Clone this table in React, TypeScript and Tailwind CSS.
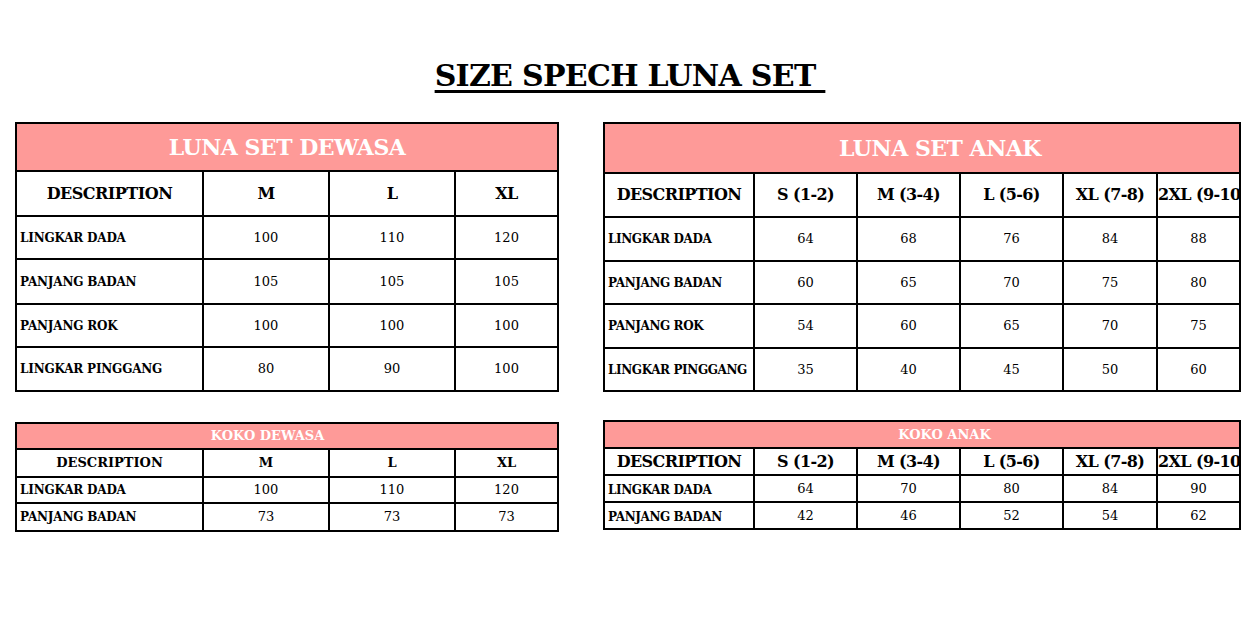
import React from "react";

type TableProps = {
  title: string;
  widthCls: string;
  colCls: string[];
  rowCls: string[];
  headers: string[];
  rows: string[][];
  titleCls: string;
  headCls: string;
  labelCls: string;
  numCls: string;
};

function SizeTable({ title, widthCls, colCls, rowCls, headers, rows, titleCls, headCls, labelCls, numCls }: TableProps) {
  return (
    <table className={`table-fixed border-collapse border-2 border-black ${widthCls}`}>
      <colgroup>
        {colCls.map((c, i) => (
          <col key={i} className={c} />
        ))}
      </colgroup>
      <tbody>
        <tr className={rowCls[0]}>
          <td colSpan={colCls.length} className={`bg-[#fe9a98] text-white text-center border-2 border-black ${titleCls}`}>
            {title}
          </td>
        </tr>
        <tr className={rowCls[1]}>
          {headers.map((h, i) => (
            <td key={i} className={`border-2 border-black text-center text-black whitespace-nowrap overflow-hidden ${headCls}`}>
              {h}
            </td>
          ))}
        </tr>
        {rows.map((r, ri) => (
          <tr key={ri} className={rowCls[ri + 2]}>
            {r.map((c, ci) => (
              <td
                key={ci}
                className={`border-2 border-black text-black whitespace-nowrap ${
                  ci === 0 ? `text-left pl-[3px] font-bold ${labelCls}` : `text-center ${numCls}`
                }`}
              >
                {c}
              </td>
            ))}
          </tr>
        ))}
      </tbody>
    </table>
  );
}

const LEFT_COLS = ["w-[187px]", "w-[126px]", "w-[126px]", "w-[103px]"];
const RIGHT_COLS = ["w-[150px]", "w-[103px]", "w-[103px]", "w-[103px]", "w-[94px]", "w-[83px]"];

export default function App() {
  return (
    <div className="w-[1260px] h-[630px] bg-white font-['DejaVu_Serif',serif]">
      <div className="h-[122px] flex justify-center pt-[58px]">
        <h1 className="text-[30px] leading-[36px] font-bold text-black underline decoration-[3px] underline-offset-[4px] whitespace-pre tracking-[-0.7px]">
          {"SIZE SPECH LUNA SET "}
        </h1>
      </div>
      <div className="flex pl-[15px] gap-[46px]">
        <div className="flex flex-col gap-[30px] w-[542px]">
          <SizeTable
            title="LUNA SET DEWASA"
            widthCls="w-[542px]"
            colCls={LEFT_COLS}
            rowCls={["h-[48px]", "h-[45px]", "h-[43px]", "h-[45px]", "h-[43px]", "h-[44px]"]}
            headers={["DESCRIPTION", "M", "L", "XL"]}
            rows={[
              ["LINGKAR DADA", "100", "110", "120"],
              ["PANJANG BADAN", "105", "105", "105"],
              ["PANJANG ROK", "100", "100", "100"],
              ["LINGKAR PINGGANG", "80", "90", "100"],
            ]}
            titleCls="text-[22px] font-bold tracking-[-0.5px]"
            headCls="text-[16px] font-bold tracking-[-0.5px]"
            labelCls="text-[12px] tracking-[-0.2px]"
            numCls="text-[13px]"
          />
          <SizeTable
            title="KOKO DEWASA"
            widthCls="w-[542px]"
            colCls={LEFT_COLS}
            rowCls={["h-[26px]", "h-[28px]", "h-[26px]", "h-[28px]"]}
            headers={["DESCRIPTION", "M", "L", "XL"]}
            rows={[
              ["LINGKAR DADA", "100", "110", "120"],
              ["PANJANG BADAN", "73", "73", "73"],
            ]}
            titleCls="text-[13px] font-bold pr-[39px]"
            headCls="text-[13px] font-bold"
            labelCls="text-[12px] tracking-[-0.2px]"
            numCls="text-[13px]"
          />
        </div>
        <div className="flex flex-col gap-[28px] w-[636px]">
          <SizeTable
            title="LUNA SET ANAK"
            widthCls="w-[636px]"
            colCls={RIGHT_COLS}
            rowCls={["h-[50px]", "h-[44px]", "h-[44px]", "h-[43px]", "h-[44px]", "h-[43px]"]}
            headers={["DESCRIPTION", "S (1-2)", "M (3-4)", "L (5-6)", "XL (7-8)", "2XL (9-10"]}
            rows={[
              ["LINGKAR DADA", "64", "68", "76", "84", "88"],
              ["PANJANG BADAN", "60", "65", "70", "75", "80"],
              ["PANJANG ROK", "54", "60", "65", "70", "75"],
              ["LINGKAR PINGGANG", "35", "40", "45", "50", "60"],
            ]}
            titleCls="text-[22px] font-bold tracking-[-0.5px] pl-[36px]"
            headCls="text-[16px] font-bold tracking-[-0.6px]"
            labelCls="text-[12px] tracking-[-0.4px]"
            numCls="text-[13px]"
          />
          <SizeTable
            title="KOKO ANAK"
            widthCls="w-[636px]"
            colCls={RIGHT_COLS}
            rowCls={["h-[27px]", "h-[27px]", "h-[27px]", "h-[27px]"]}
            headers={["DESCRIPTION", "S (1-2)", "M (3-4)", "L (5-6)", "XL (7-8)", "2XL (9-10"]}
            rows={[
              ["LINGKAR DADA", "64", "70", "80", "84", "90"],
              ["PANJANG BADAN", "42", "46", "52", "54", "62"],
            ]}
            titleCls="text-[13px] font-bold pl-[45px]"
            headCls="text-[16px] font-bold tracking-[-0.6px]"
            labelCls="text-[12px] tracking-[-0.4px] pt-[3px]"
            numCls="text-[13px]"
          />
        </div>
      </div>
    </div>
  );
}
